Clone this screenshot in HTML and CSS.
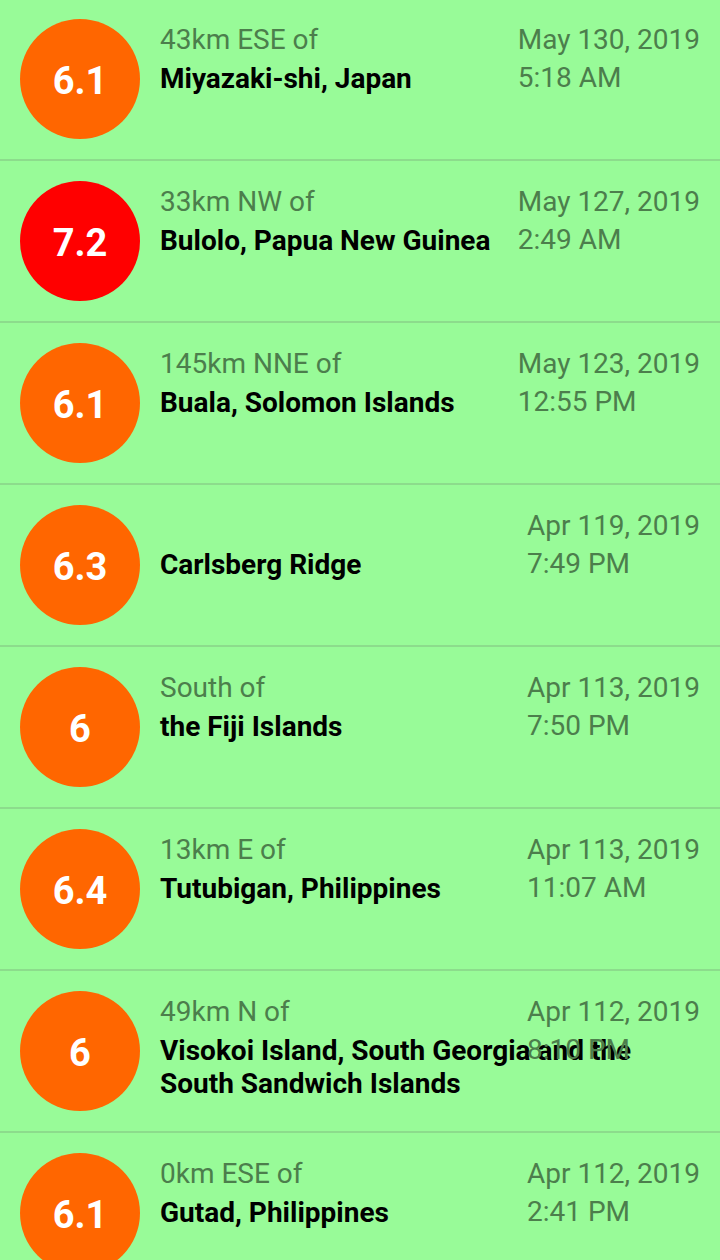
FILE: index.html
```html
<!DOCTYPE html>
<html lang="en">
<head>
<meta charset="utf-8">
<title>Earthquakes</title>
<link rel="stylesheet" href="styles.css">
</head>
<body>
<ul class="list">
  <li class="quake">
    <div class="mag mag-orange">6.1</div>
    <div class="body">
      <div class="place">
        <div class="offset">43km ESE of</div>
        <div class="location">Miyazaki-shi, Japan</div>
      </div>
      <div class="when">
        <div class="date">May 130, 2019</div>
        <div class="time">5:18 AM</div>
      </div>
    </div>
  </li>
  <li class="quake">
    <div class="mag mag-red">7.2</div>
    <div class="body">
      <div class="place">
        <div class="offset">33km NW of</div>
        <div class="location">Bulolo, Papua New Guinea</div>
      </div>
      <div class="when">
        <div class="date">May 127, 2019</div>
        <div class="time">2:49 AM</div>
      </div>
    </div>
  </li>
  <li class="quake">
    <div class="mag mag-orange">6.1</div>
    <div class="body">
      <div class="place">
        <div class="offset">145km NNE of</div>
        <div class="location">Buala, Solomon Islands</div>
      </div>
      <div class="when">
        <div class="date">May 123, 2019</div>
        <div class="time">12:55 PM</div>
      </div>
    </div>
  </li>
  <li class="quake">
    <div class="mag mag-orange">6.3</div>
    <div class="body">
      <div class="place">
        <div class="offset"></div>
        <div class="location">Carlsberg Ridge</div>
      </div>
      <div class="when">
        <div class="date">Apr 119, 2019</div>
        <div class="time">7:49 PM</div>
      </div>
    </div>
  </li>
  <li class="quake">
    <div class="mag mag-orange">6</div>
    <div class="body">
      <div class="place">
        <div class="offset">South of</div>
        <div class="location">the Fiji Islands</div>
      </div>
      <div class="when">
        <div class="date">Apr 113, 2019</div>
        <div class="time">7:50 PM</div>
      </div>
    </div>
  </li>
  <li class="quake">
    <div class="mag mag-orange">6.4</div>
    <div class="body">
      <div class="place">
        <div class="offset">13km E of</div>
        <div class="location">Tutubigan, Philippines</div>
      </div>
      <div class="when">
        <div class="date">Apr 113, 2019</div>
        <div class="time">11:07 AM</div>
      </div>
    </div>
  </li>
  <li class="quake">
    <div class="mag mag-orange">6</div>
    <div class="body">
      <div class="place">
        <div class="offset">49km N of</div>
        <div class="location">Visokoi Island, South Georgia and the South Sandwich Islands</div>
      </div>
      <div class="when">
        <div class="date">Apr 112, 2019</div>
        <div class="time">8:10 PM</div>
      </div>
    </div>
  </li>
  <li class="quake">
    <div class="mag mag-orange">6.1</div>
    <div class="body">
      <div class="place">
        <div class="offset">0km ESE of</div>
        <div class="location">Gutad, Philippines</div>
      </div>
      <div class="when">
        <div class="date">Apr 112, 2019</div>
        <div class="time">2:41 PM</div>
      </div>
    </div>
  </li>
</ul>
</body>
</html>
```

FILE: styles.css
```css
* {
  box-sizing: border-box;
}

html,
body {
  margin: 0;
  padding: 0;
  background: #98fb98;
}

body {
  font-family: Roboto, "Noto Sans", "Liberation Sans", sans-serif;
  width: 720px;
  height: 1260px;
  overflow: hidden;
}

.list {
  list-style: none;
  margin: -1px 0 0;
  padding: 0;
}

.quake {
  display: flex;
  align-items: flex-start;
  gap: 20px;
  height: 162px;
  padding: 20px;
  border-bottom: 2px solid #8cdc8c;
}

.mag {
  flex: 0 0 120px;
  width: 120px;
  height: 120px;
  border-radius: 50%;
  display: flex;
  align-items: center;
  justify-content: center;
  color: #ffffff;
  font-size: 38px;
  font-weight: 700;
  padding-top: 3px;
}

.mag-orange {
  background: #ff6600;
}

.mag-red {
  background: #ff0000;
}

.body {
  flex: 1;
  display: grid;
  grid-template-columns: 1fr auto;
  padding-top: 2px;
}

.place {
  grid-column: 1 / 3;
  grid-row: 1;
}

.when {
  grid-column: 2;
  grid-row: 1;
}

.offset,
.date,
.time {
  font-size: 28px;
  line-height: 38px;
  height: 38px;
  color: #4c7e4c;
}

.location {
  font-size: 28px;
  font-weight: 700;
  line-height: 33px;
  margin-top: 3px;
  color: #000000;
}
```
